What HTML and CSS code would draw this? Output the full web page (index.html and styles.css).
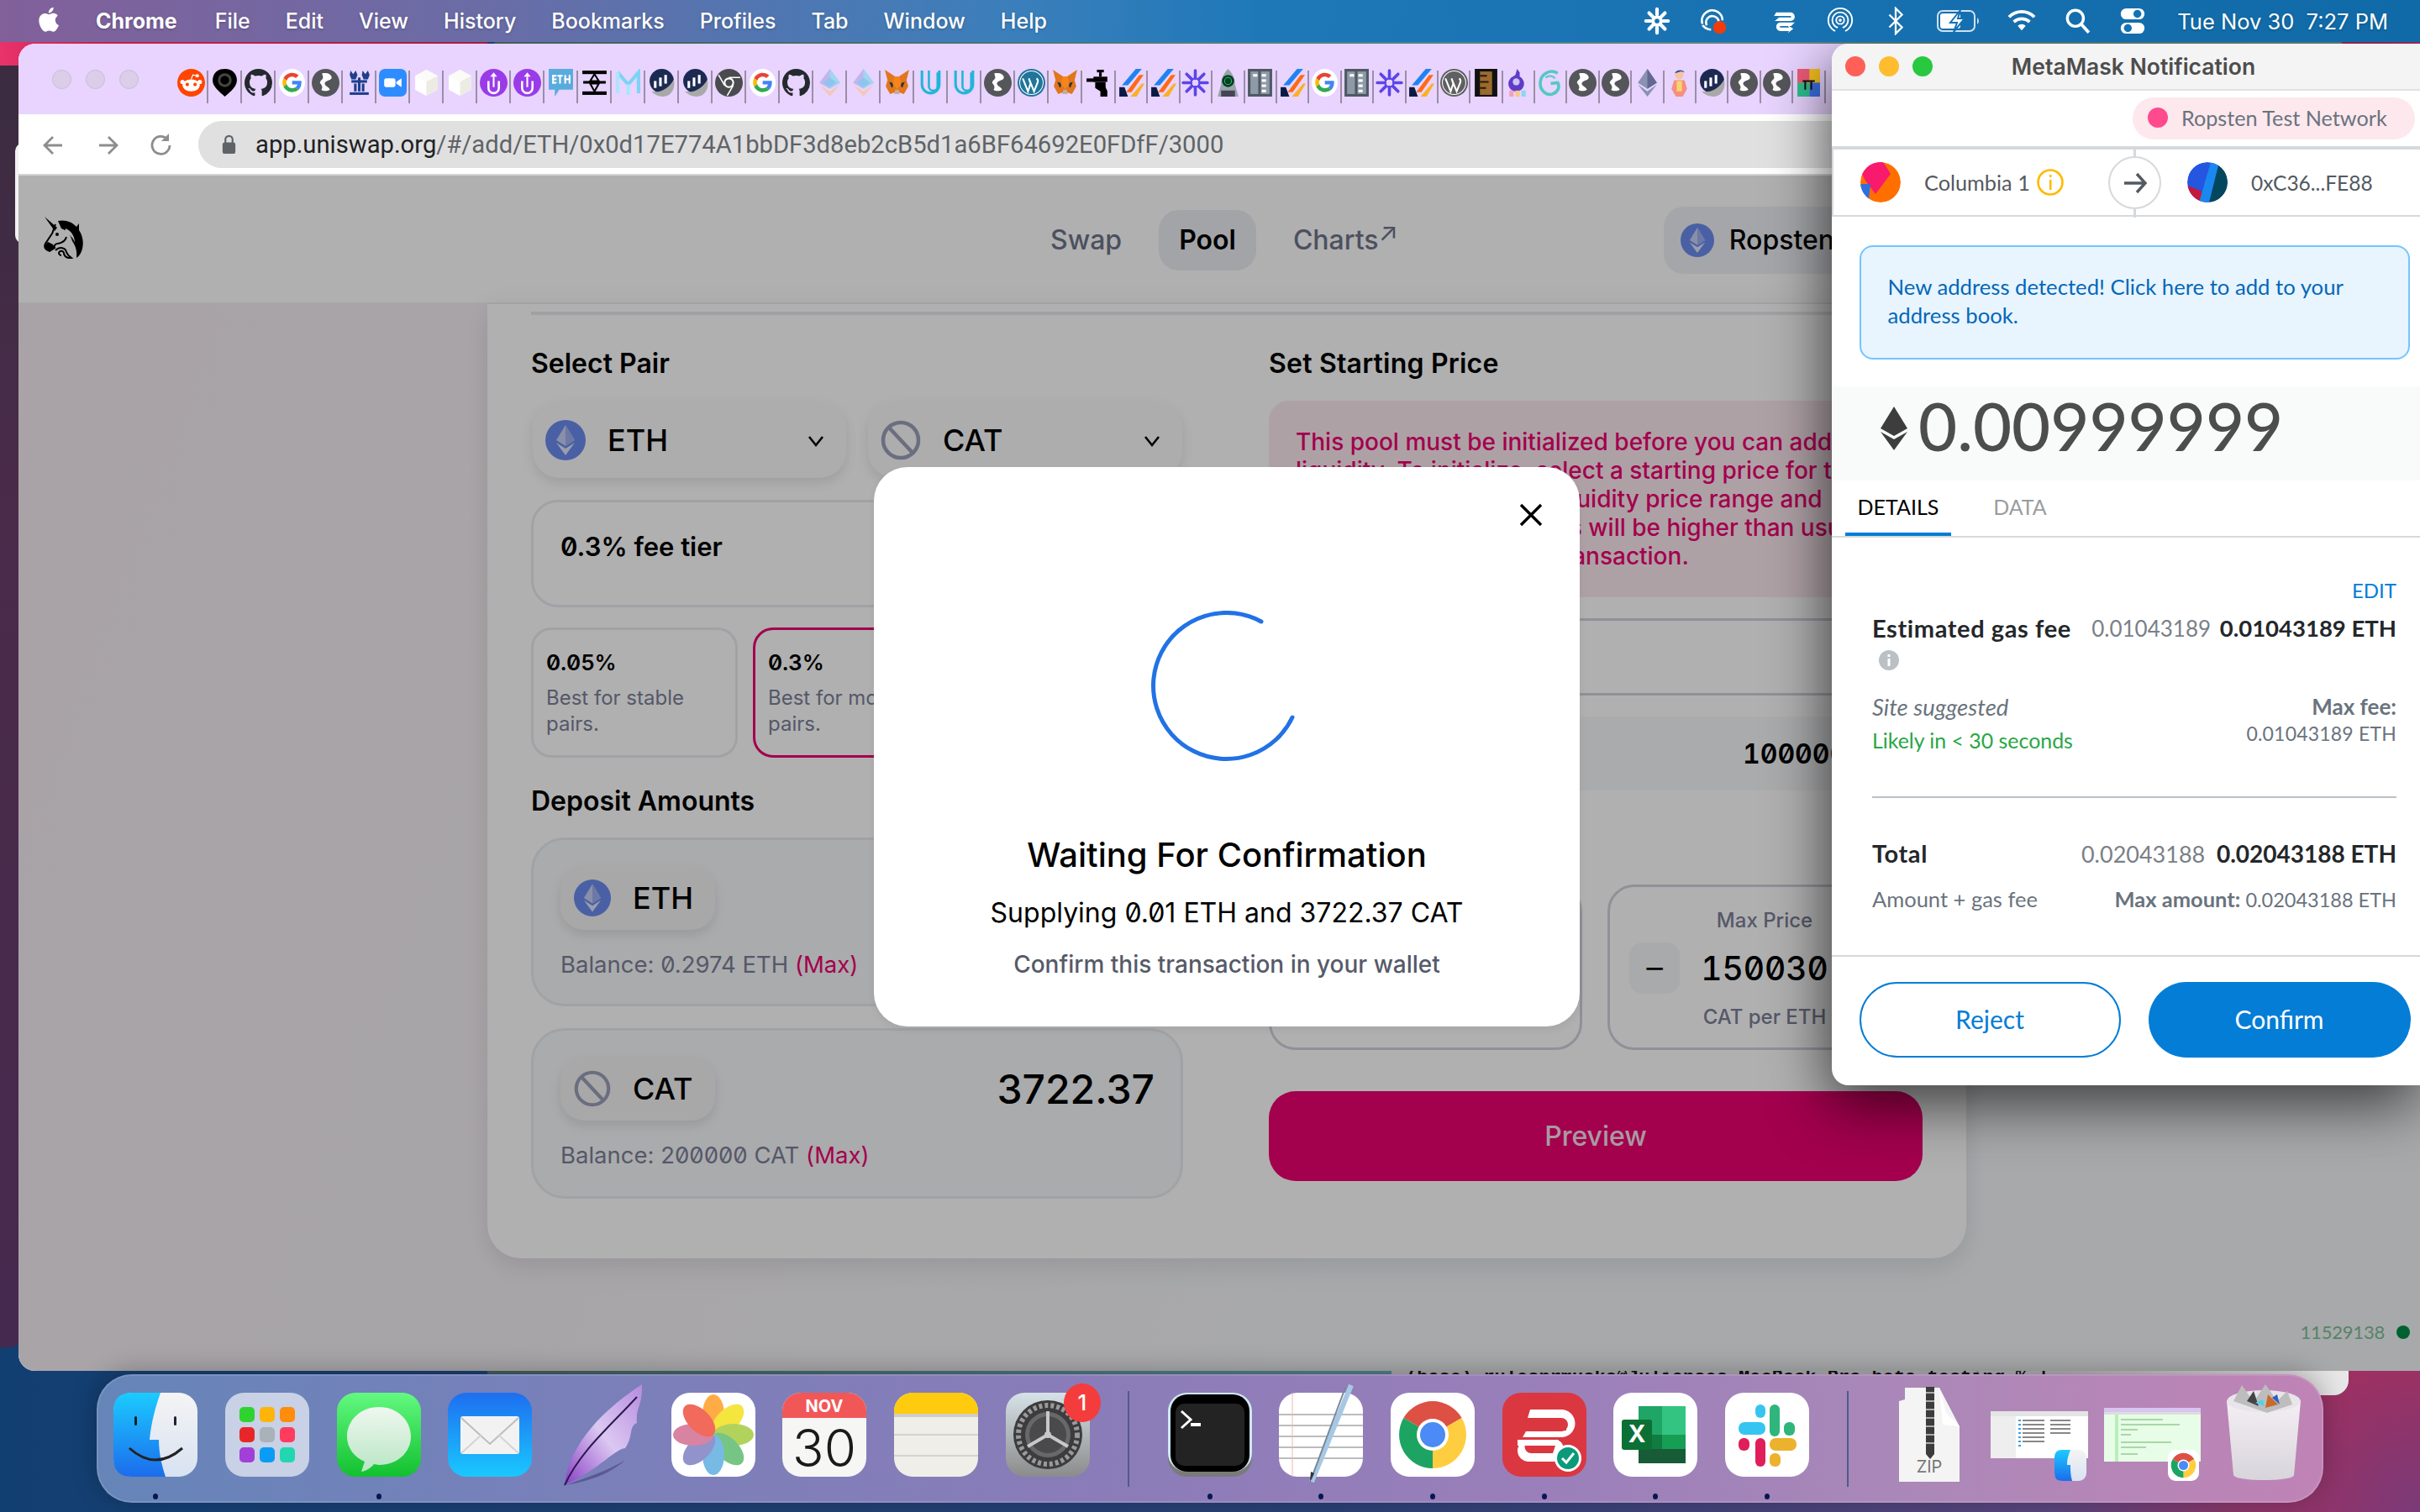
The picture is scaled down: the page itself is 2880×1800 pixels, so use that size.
FILE: index.html
```html
<!DOCTYPE html>
<html lang="en">
<head>
<meta charset="utf-8">
<title>Uniswap - MetaMask Notification</title>
<link rel="stylesheet" href="styles.css">
</head>
<body>
<svg class="defs" aria-hidden="true">
  <defs>
    <linearGradient id="gFinder" x1="0" y1="0" x2="0" y2="1"><stop offset="0" stop-color="#1ccbff"/><stop offset="1" stop-color="#1c6cec"/></linearGradient>
    <linearGradient id="gFinderR" x1="0" y1="0" x2="0" y2="1"><stop offset="0" stop-color="#f4f4f4"/><stop offset="1" stop-color="#d8e2f2"/></linearGradient>
    <linearGradient id="gMsg" x1="0" y1="0" x2="0" y2="1"><stop offset="0" stop-color="#62f980"/><stop offset="1" stop-color="#12c02f"/></linearGradient>
    <linearGradient id="gBubble" x1="0" y1="0" x2="0" y2="1"><stop offset="0" stop-color="#eef7ef"/><stop offset="1" stop-color="#b9e6c4"/></linearGradient>
    <linearGradient id="gMail" x1="0" y1="0" x2="0" y2="1"><stop offset="0" stop-color="#1e6ef0"/><stop offset="1" stop-color="#1ac8ff"/></linearGradient>
    <linearGradient id="gFeather" x1="1" y1="0" x2="0" y2="1"><stop offset="0" stop-color="#b58be0"/><stop offset=".5" stop-color="#dcc8f2"/><stop offset="1" stop-color="#8a3fc6"/></linearGradient>
    <linearGradient id="gGear" x1="0" y1="0" x2="0" y2="1"><stop offset="0" stop-color="#d6e2e8"/><stop offset="1" stop-color="#8b8b8b"/></linearGradient>
    <linearGradient id="gTrash" x1="0" y1="0" x2="0" y2="1"><stop offset="0" stop-color="#f4f0f4"/><stop offset="1" stop-color="#d8d4dc"/></linearGradient>
    <linearGradient id="gLast" x1="0" y1="0" x2="1" y2="1"><stop offset="0" stop-color="#f05a4a"/><stop offset=".5" stop-color="#f4c020"/><stop offset="1" stop-color="#1fb88a"/></linearGradient>

    <symbol id="f-reddit" viewBox="0 0 32 32"><circle cx="16" cy="16" r="16" fill="#ff4500"/><ellipse cx="16" cy="19" rx="10" ry="7" fill="#fff"/><circle cx="11.500" cy="18" r="2" fill="#ff4500"/><circle cx="20.500" cy="18" r="2" fill="#ff4500"/><circle cx="23" cy="8" r="2" fill="#fff"/><path d="M16 12 L18 7 L23 8" stroke="#fff" stroke-width="1.200" fill="none"/><circle cx="6" cy="15" r="2.500" fill="#fff"/><circle cx="26" cy="15" r="2.500" fill="#fff"/></symbol>
    <symbol id="f-alien" viewBox="0 0 32 32"><path d="M16 0C7 0 2 6 2 13c0 7 6 12 14 19 8-7 14-12 14-19C30 6 25 0 16 0z" fill="#000"/><circle cx="16" cy="13" r="8" fill="#444"/><circle cx="16" cy="13" r="5" fill="#000"/></symbol>
    <symbol id="f-github" viewBox="0 0 16 16"><path fill="#24292e" d="M8 0C3.580 0 0 3.580 0 8c0 3.540 2.290 6.530 5.470 7.590.4.070.55-.17.55-.38 0-.19-.01-.82-.01-1.490-2.010.37-2.530-.49-2.690-.94-.09-.23-.48-.94-.82-1.130-.28-.15-.68-.52-.01-.53.63-.01 1.080.58 1.230.82.72 1.210 1.870.87 2.330.66.07-.52.28-.87.51-1.070-1.780-.2-3.640-.89-3.640-3.950 0-.87.31-1.590.82-2.150-.08-.2-.36-1.020.08-2.120 0 0 .67-.21 2.200.82.64-.18 1.320-.27 2-.27.68 0 1.360.09 2 .27 1.530-1.040 2.200-.82 2.200-.82.44 1.100.16 1.920.08 2.120.51.56.82 1.270.82 2.150 0 3.070-1.870 3.750-3.650 3.950.29.25.54.73.54 1.480 0 1.070-.01 1.930-.01 2.200 0 .21.15.46.55.38A8.013 8.013 0 0016 8c0-4.420-3.580-8-8-8z"/></symbol>
    <symbol id="f-google" viewBox="0 0 64 64"><ellipse cx="32" cy="32" rx="30" ry="32" fill="#fff"/><g transform="translate(10 9) scale(.93)"><path fill="#EA4335" d="M24 9.500c3.540 0 6.710 1.220 9.210 3.600l6.850-6.850C35.900 2.380 30.470 0 24 0 14.620 0 6.510 5.380 2.560 13.220l7.980 6.190C12.430 13.720 17.740 9.500 24 9.500z"/><path fill="#4285F4" d="M46.980 24.550c0-1.570-.15-3.090-.38-4.550H24v9.020h12.940c-.58 2.960-2.260 5.480-4.780 7.180l7.730 6c4.510-4.180 7.090-10.360 7.090-17.650z"/><path fill="#FBBC05" d="M10.530 28.590c-.48-1.450-.76-2.990-.76-4.590s.27-3.140.76-4.590l-7.980-6.190C.92 16.460 0 20.120 0 24c0 3.880.92 7.540 2.560 10.780l7.970-6.190z"/><path fill="#34A853" d="M24 48c6.480 0 11.930-2.130 15.890-5.810l-7.730-6c-2.150 1.450-4.920 2.300-8.160 2.300-6.260 0-11.570-4.220-13.470-9.910l-7.980 6.190C6.510 42.620 14.620 48 24 48z"/></g></symbol>
    <symbol id="f-globe" viewBox="0 0 32 32"><circle cx="16" cy="16" r="16" fill="#55565a"/><path d="M12 5c6-1 11 1 11 5s-8 3-8 7c0 3 4 3 6 7-3 2-8 2-10 0 2-2 1-5-1-7-2-3 3-4 3-7 0-2-1-3-1-5z" fill="#fff"/></symbol>
    <symbol id="f-crown" viewBox="0 0 32 32"><g fill="#1d3f8c"><path d="M6 2l3 4 3-4 2 5-2 5H7L5 7zM20 2l3 4 3-4 2 5-2 5h-5l-2-5z"/><rect x="7" y="13" width="18" height="3"/><rect x="10" y="17" width="3" height="9"/><rect x="19" y="17" width="3" height="9"/><rect x="5" y="27" width="22" height="3"/><rect x="14.500" y="10" width="3" height="16"/></g></symbol>
    <symbol id="f-zoom" viewBox="0 0 32 32"><rect width="32" height="32" rx="7" fill="#2d8cff"/><rect x="6" y="11" width="13" height="10" rx="2.500" fill="#fff"/><path d="M20 15l6-4v10l-6-4z" fill="#fff"/></symbol>
    <symbol id="f-box" viewBox="0 0 32 32"><path d="M16 1L29 8v16L16 31 3 24V8z" fill="#f4f4ee"/><path d="M16 1L29 8 16 15 3 8z" fill="#fbfbf7"/><path d="M16 15v16L3 24V8z" fill="#fff"/><path d="M16 15L29 8v16L16 31z" fill="#ecece4"/></symbol>
    <symbol id="f-uni" viewBox="0 0 32 32"><circle cx="16" cy="16" r="16" fill="#9a3be8"/><path d="M10 14v8a6 6 0 0012 0v-8" stroke="#fff" stroke-width="2.500" fill="none"/><path d="M16 4l4 5h-8z" fill="#fff"/><rect x="15" y="9" width="2" height="12" fill="#fff"/></symbol>
    <symbol id="f-ethtag" viewBox="0 0 32 32"><path d="M2 0h28v24H14l-5 8v-8H2z" fill="#59abde"/><rect x="6" y="7" width="5" height="2" fill="#fff"/><rect x="6" y="11" width="5" height="2" fill="#fff"/><rect x="6" y="15" width="5" height="2" fill="#fff"/><rect x="6" y="7" width="2" height="10" fill="#fff"/><rect x="12" y="7" width="6" height="2" fill="#fff"/><rect x="14" y="7" width="2" height="10" fill="#fff"/><rect x="20" y="7" width="2" height="10" fill="#fff"/><rect x="25" y="7" width="2" height="10" fill="#fff"/><rect x="20" y="11" width="7" height="2" fill="#fff"/></symbol>
    <symbol id="f-tbar" viewBox="0 0 32 32"><rect x="2" y="2" width="28" height="4"/><rect x="2" y="26" width="28" height="4"/><rect x="3" y="14" width="26" height="3"/><path d="M16 6l5 8H11zM16 26l-5-9h10z" fill="none" stroke="#000" stroke-width="2"/></symbol>
    <symbol id="f-m" viewBox="0 0 32 32"><path d="M4 4l12 14L28 4v24" fill="none" stroke="#7dd3f5" stroke-width="4"/><path d="M4 4v24M16 18v12" fill="none" stroke="#a9e6fb" stroke-width="4"/></symbol>
    <symbol id="f-chart" viewBox="0 0 32 32"><circle cx="16" cy="14" r="14" fill="#1c2a52"/><rect x="7" y="14" width="3" height="8" fill="#fff"/><rect x="13" y="10" width="3" height="10" fill="#fff"/><rect x="19" y="7" width="3" height="10" fill="#fff"/><path d="M4 26c10 2 20-3 26-14 2 10-2 19-12 20-7 0-11-3-14-6z" fill="#a8a8a8"/></symbol>
    <symbol id="f-cdark" viewBox="0 0 32 32"><circle cx="16" cy="16" r="16" fill="#4a4b4f"/><circle cx="16" cy="16" r="6" fill="#fff"/><circle cx="16" cy="16" r="4" fill="#4a4b4f"/><path d="M16 10h13M11 19L4 7M21 19l-7 12" stroke="#fff" stroke-width="1.500"/></symbol>
    <symbol id="f-eth" viewBox="0 0 32 32"><path d="M16 0L28 16 16 23 4 16z" fill="#c2b5ee"/><path d="M16 0L28 16 16 23z" fill="#9fd6f0"/><path d="M16 26L28 18 16 32 4 18z" fill="#f2c8b8"/><path d="M16 10l8 6-8 5-8-5z" fill="#8fc4ee"/></symbol>
    <symbol id="f-fox" viewBox="0 0 32 32"><path d="M2 1l12 8h4l12-8-3 12 2 7-5 9-6-2h-4l-6 2-5-9 2-7z" fill="#e2761b"/><path d="M7 15l6 2-3 5zM25 15l-6 2 3 5z" fill="#233447"/><path d="M14 24h4l1 5h-6z" fill="#c0ad9e"/><path d="M13 9h6l2 9-5 5-5-5z" fill="#f6851b"/></symbol>
    <symbol id="f-ucyan" viewBox="0 0 32 32"><path d="M6 2v16a10 10 0 0020 0V2" fill="none" stroke="#22b5d8" stroke-width="3"/><path d="M14 2v18a5 5 0 0010 0V4" fill="none" stroke="#22b5d8" stroke-width="2.500"/></symbol>
    <symbol id="f-wp" viewBox="0 0 32 32"><circle cx="16" cy="16" r="16" fill="#21759b"/><circle cx="16" cy="16" r="13.500" fill="none" stroke="#fff"/><path d="M6 11l6 15 3-9-2-6M13 11l6 15 4-10c1-2 0-4-1-5" fill="none" stroke="#fff" stroke-width="2"/></symbol>
    <symbol id="f-wpg" viewBox="0 0 32 32"><circle cx="16" cy="16" r="16" fill="#5f6062"/><circle cx="16" cy="16" r="13.500" fill="none" stroke="#fff"/><path d="M6 11l6 15 3-9-2-6M13 11l6 15 4-10c1-2 0-4-1-5" fill="none" stroke="#fff" stroke-width="2"/></symbol>
    <symbol id="f-tap" viewBox="0 0 32 32"><rect x="14" y="1" width="8" height="3"/><rect x="16.500" y="4" width="3" height="5"/><rect x="10" y="9" width="16" height="6"/><rect x="2" y="11" width="10" height="4"/><path d="M12 15h12v5c0 3 2 4 2 6v6h-8v-6l-6-4z"/></symbol>
    <symbol id="f-stripe" viewBox="0 0 32 32"><path d="M21 0h7L12 19H5z" fill="#1f84f0"/><path d="M25 7h5L16 27h-6z" fill="#ff6a13"/><path d="M28 17h3L22 32h-7z" fill="#fbb023"/><path d="M2 21h6l4 11H2z" fill="#0a1a44"/></symbol>
    <symbol id="f-aster" viewBox="0 0 32 32"><g stroke="#5b45e8" stroke-width="3.500" stroke-linecap="round"><path d="M16 2v9M16 21v9M2 16h9M21 16h9M6 6l6 6M20 20l6 6M26 6l-6 6M12 20l-6 6"/></g><circle cx="16" cy="16" r="5" fill="none" stroke="#5b45e8" stroke-width="2"/></symbol>
    <symbol id="f-astro" viewBox="0 0 32 32"><path d="M16 0c6 6 8 12 8 18l4 14H4l4-14c0-6 2-12 8-18z" fill="#9aa4aa"/><circle cx="16" cy="14" r="7" fill="#063d22"/><circle cx="16" cy="14" r="4" fill="none" stroke="#24c06a"/><rect x="8" y="25" width="16" height="7" fill="#445"/></symbol>
    <symbol id="f-bldg" viewBox="0 0 32 32"><rect x="2" y="0" width="28" height="32" fill="#4e5965"/><rect x="5" y="3" width="22" height="26" fill="#8e9aa6"/><g fill="#fff"><rect x="8" y="6" width="5" height="3"/><rect x="18" y="6" width="5" height="3"/><rect x="18" y="12" width="5" height="3"/><rect x="18" y="18" width="5" height="3"/><rect x="18" y="24" width="5" height="3"/></g><rect x="14" y="3" width="3" height="26" fill="#4e5965"/></symbol>
    <symbol id="f-brown" viewBox="0 0 32 32"><rect x="3" y="0" width="26" height="32" fill="#111"/><rect x="9" y="3" width="14" height="27" fill="#9a6a2e"/><path d="M9 8h8M9 15h10M9 22h7" stroke="#2a1a0a" stroke-width="2"/></symbol>
    <symbol id="f-flask" viewBox="0 0 32 32"><path d="M15 0l3 4v5a9 9 0 11-8 0l3-2z" fill="#5e3cc8"/><circle cx="14" cy="15" r="4" fill="#cfc2f5"/><rect x="6" y="25" width="5" height="7" fill="#f59fc0"/><rect x="13" y="25" width="5" height="7" fill="#f9c780"/><rect x="20" y="25" width="5" height="7" fill="#8cd7f0"/></symbol>
    <symbol id="f-teal" viewBox="0 0 32 32"><path d="M24 5C16 0 5 5 4 15c-1 10 7 16 14 14 6-2 9-8 6-13l-8 1" fill="none" stroke="#54c8c2" stroke-width="3.500"/><path d="M10 10c4-3 9-2 11 1" fill="none" stroke="#54c8c2" stroke-width="2"/></symbol>
    <symbol id="f-ethg" viewBox="0 0 32 32"><path d="M16 0L27 16 16 23 5 16z" fill="#8a92b2"/><path d="M16 0L27 16 16 23z" fill="#62688f"/><path d="M16 26L27 18 16 32 5 18z" fill="#8a92b2"/></symbol>
    <symbol id="f-girl" viewBox="0 0 32 32"><circle cx="16" cy="7" r="5" fill="#f7c4a0"/><path d="M11 5c1-4 9-5 11-1l-4-1z" fill="#2f4aa0"/><path d="M10 13h12l3 10-5 9h-8l-5-9z" fill="#f58f80"/><rect x="13" y="14" width="6" height="12" fill="#f7d56a"/></symbol>
    <symbol id="f-last" viewBox="0 0 32 32"><rect x="3" width="26" height="32" fill="url(#gLast)"/><rect x="3" width="14" height="16" fill="#ef5a78"/><rect x="17" width="12" height="16" fill="#f4c020"/><rect x="3" y="16" width="14" height="16" fill="#2dbf8e"/><rect x="17" y="16" width="12" height="16" fill="#3b6ee0"/><path d="M9 14h14M12 14v10M19 14v10" stroke="#111" stroke-width="2"/></symbol>

    <symbol id="chrome-logo" viewBox="0 0 100 100"><path d="M50 50L15.400 30A40 40 0 0 1 84.600 30Z" fill="#dd5044"/><path d="M50 50L84.600 30A40 40 0 0 1 50 90Z" fill="#ffcd40"/><path d="M50 50L50 90A40 40 0 0 1 15.400 30Z" fill="#1da462"/><circle cx="50" cy="50" r="19" fill="#fff"/><circle cx="50" cy="50" r="15" fill="#4c8bf5"/></symbol>
    <symbol id="eth-token" viewBox="0 0 48 48"><circle cx="24" cy="24" r="24" fill="#6c8bf0"/><path d="M24 6l11 18-11 7-11-7z" fill="#c5cff5"/><path d="M24 6v25l11-7z" fill="#9eaef0"/><path d="M24 34l11-7-11 15-11-15z" fill="#e0e5fb"/></symbol>
    <symbol id="cat-token" viewBox="0 0 48 48"><circle cx="24" cy="24" r="21" fill="none" stroke="#9aa0b8" stroke-width="4.500"/><path d="M10 9l28 30" stroke="#9aa0b8" stroke-width="4.500"/></symbol>
    <symbol id="chev" viewBox="0 0 24 24"><path d="M4 8l8 10 8-10" fill="none" stroke="#000" stroke-width="2.600"/></symbol>
  </defs>
</svg>

<div class="desktop">
  <div class="back-left"></div>
  <div class="back-top"></div>
  <div class="back-sliver"></div>
  <div class="terminal"><span class="terminal-line">(base) rulesnrmusks@Julianses-MacBook-Pro beta-testing % |</span></div>

  <header class="menubar">
    <svg class="apple" viewBox="0 0 24 28"><path d="M19.700 14.900c0-3 2.400-4.400 2.500-4.500-1.400-2-3.500-2.300-4.300-2.300-1.800-.2-3.600 1.100-4.500 1.100-.9 0-2.400-1.100-3.900-1-2 0-3.900 1.200-4.900 3-2.100 3.600-.5 9 1.500 12 1 1.400 2.200 3.100 3.800 3 1.500-.1 2.100-1 3.900-1 1.800 0 2.300 1 3.900 1 1.600 0 2.700-1.500 3.700-2.900 1.200-1.700 1.600-3.300 1.700-3.400-.1 0-3.300-1.300-3.400-5zM16.700 6c.8-1 1.400-2.400 1.200-3.800-1.200.1-2.700.8-3.500 1.800-.8.900-1.500 2.300-1.300 3.700 1.400.1 2.700-.7 3.600-1.700z" fill="#fff"/></svg>
    <span class="menu-app">Chrome</span>
    <span class="menu-item">File</span>
    <span class="menu-item">Edit</span>
    <span class="menu-item">View</span>
    <span class="menu-item">History</span>
    <span class="menu-item">Bookmarks</span>
    <span class="menu-item">Profiles</span>
    <span class="menu-item">Tab</span>
    <span class="menu-item">Window</span>
    <span class="menu-item">Help</span>
    <div class="status-icons">
      <svg class="si" viewBox="0 0 34 36"><g stroke="#fff" stroke-width="4.400" stroke-linecap="round"><path d="M17 3v7M17 26v7M3 18h7M24 18h7M7 8l5 5M22 23l5 5M27 8l-5 5M12 23l-5 5"/></g><circle cx="17" cy="18" r="7" fill="#fff"/><circle cx="17" cy="18" r="3" fill="#1272b4"/></svg>
      <svg class="si si-gap" viewBox="0 0 40 36"><path d="M6 22c-3-8 2-17 12-19 9-1 16 6 16 14" fill="none" stroke="#fff" stroke-width="3"/><path d="M12 24c-3-6 1-12 7-13 6 0 10 4 10 9" fill="none" stroke="#fff" stroke-width="3"/><path d="M18 30c-5 0-9-2-12-6" fill="none" stroke="#fff" stroke-width="3"/><circle cx="30" cy="27" r="9" fill="#f03c0a"/></svg>
      <svg class="si" viewBox="0 0 40 36"><path d="M8 6h20a6 6 0 010 12H6l6-5h16a1 1 0 000-2H5z" fill="#fff"/><path d="M34 20H14a5 5 0 000 12h12l-2 3 8-6-8-5 2 3H14a1 1 0 010-2h15z" fill="#fff"/></svg>
      <svg class="si" viewBox="0 0 36 36"><g fill="none" stroke="#fff" stroke-width="2"><circle cx="18" cy="17" r="15"/><circle cx="18" cy="17" r="10"/><circle cx="18" cy="17" r="5"/></g><path d="M8 36h20L18 22z" fill="#1272b4"/><circle cx="18" cy="17" r="2" fill="#fff"/></svg>
      <svg class="si" viewBox="0 0 24 36"><path d="M4 10l16 16-8 8V2l8 8L4 26" fill="none" stroke="#fff" stroke-width="2.400"/></svg>
      <svg class="si-wide" viewBox="0 0 52 28"><rect x="1" y="2" width="44" height="24" rx="6" fill="none" stroke="#cfe2f0" stroke-width="2"/><rect x="4" y="5" width="24" height="18" rx="3" fill="#fff"/><path d="M28 1l-12 15h8l-4 11 13-16h-8z" fill="#fff" stroke="#1272b4" stroke-width="2"/><path d="M48 10v8a5 5 0 002-4 5 5 0 00-2-4z" fill="#cfe2f0"/></svg>
      <svg class="si" viewBox="0 0 36 30"><g fill="none" stroke="#fff" stroke-width="4"><path d="M2 10c9-9 23-9 32 0"/><path d="M8 16c6-5 14-5 20 0"/></g><path d="M13 21a7 7 0 0110 0l-5 6z" fill="#fff"/></svg>
      <svg class="si" viewBox="0 0 30 32"><circle cx="13" cy="13" r="9" fill="none" stroke="#fff" stroke-width="3.200"/><path d="M20 20l8 9" stroke="#fff" stroke-width="3.600"/></svg>
      <svg class="si" viewBox="0 0 36 36"><rect x="3" y="2" width="30" height="14" rx="7" fill="#fff"/><circle cx="24" cy="9" r="5" fill="#1272b4"/><rect x="3" y="20" width="30" height="14" rx="7" fill="#fff"/><circle cx="12" cy="27" r="5" fill="#1272b4"/></svg>
      <span class="clock">Tue Nov 30&nbsp;&nbsp;7:27 PM</span>
    </div>
  </header>

  <main class="chrome">
    <div class="tabbar">
      <div class="lights-off"><i></i><i></i><i></i></div>
      <div class="tabs">
        <span class="tab"><svg><use href="#f-reddit"/></svg></span><span class="tab"><svg><use href="#f-alien"/></svg></span><span class="tab"><svg><use href="#f-github"/></svg></span><span class="tab"><svg><use href="#f-google"/></svg></span><span class="tab"><svg><use href="#f-globe"/></svg></span><span class="tab"><svg><use href="#f-crown"/></svg></span><span class="tab"><svg><use href="#f-zoom"/></svg></span><span class="tab"><svg><use href="#f-box"/></svg></span><span class="tab"><svg><use href="#f-box"/></svg></span><span class="tab"><svg><use href="#f-uni"/></svg></span><span class="tab"><svg><use href="#f-uni"/></svg></span><span class="tab"><svg><use href="#f-ethtag"/></svg></span><span class="tab"><svg><use href="#f-tbar"/></svg></span><span class="tab"><svg><use href="#f-m"/></svg></span><span class="tab"><svg><use href="#f-chart"/></svg></span><span class="tab"><svg><use href="#f-chart"/></svg></span><span class="tab"><svg><use href="#f-cdark"/></svg></span><span class="tab"><svg><use href="#f-google"/></svg></span><span class="tab"><svg><use href="#f-github"/></svg></span><span class="tab"><svg><use href="#f-eth"/></svg></span><span class="tab"><svg><use href="#f-eth"/></svg></span><span class="tab"><svg><use href="#f-fox"/></svg></span><span class="tab"><svg><use href="#f-ucyan"/></svg></span><span class="tab"><svg><use href="#f-ucyan"/></svg></span><span class="tab"><svg><use href="#f-globe"/></svg></span><span class="tab"><svg><use href="#f-wp"/></svg></span><span class="tab"><svg><use href="#f-fox"/></svg></span><span class="tab"><svg><use href="#f-tap"/></svg></span><span class="tab tab-s"><svg><use href="#f-stripe"/></svg></span><span class="tab tab-s"><svg><use href="#f-stripe"/></svg></span><span class="tab tab-s"><svg><use href="#f-aster"/></svg></span><span class="tab tab-s"><svg><use href="#f-astro"/></svg></span><span class="tab tab-s"><svg><use href="#f-bldg"/></svg></span><span class="tab tab-s"><svg><use href="#f-stripe"/></svg></span><span class="tab tab-s"><svg><use href="#f-google"/></svg></span><span class="tab tab-s"><svg><use href="#f-bldg"/></svg></span><span class="tab tab-s"><svg><use href="#f-aster"/></svg></span><span class="tab tab-s"><svg><use href="#f-stripe"/></svg></span><span class="tab tab-s"><svg><use href="#f-wpg"/></svg></span><span class="tab tab-s"><svg><use href="#f-brown"/></svg></span><span class="tab tab-s"><svg><use href="#f-flask"/></svg></span><span class="tab tab-s"><svg><use href="#f-teal"/></svg></span><span class="tab tab-s"><svg><use href="#f-globe"/></svg></span><span class="tab tab-s"><svg><use href="#f-globe"/></svg></span><span class="tab tab-s"><svg><use href="#f-ethg"/></svg></span><span class="tab tab-s"><svg><use href="#f-girl"/></svg></span><span class="tab tab-s"><svg><use href="#f-chart"/></svg></span><span class="tab tab-s"><svg><use href="#f-globe"/></svg></span><span class="tab tab-s"><svg><use href="#f-globe"/></svg></span><span class="tab tab-s"><svg><use href="#f-last"/></svg></span>
      </div>
    </div>
    <div class="toolbar">
      <svg class="tool tool-first" viewBox="0 0 32 32"><path d="M26 16H6M15 6L5 16l10 10" fill="none" stroke="#8d8d8d" stroke-width="2.800"/></svg>
      <svg class="tool" viewBox="0 0 32 32"><path d="M6 16h20M17 6l10 10-10 10" fill="none" stroke="#8d8d8d" stroke-width="2.800"/></svg>
      <svg class="tool" viewBox="0 0 32 32"><path d="M26 16a10.500 10.500 0 11-3-7.500" fill="none" stroke="#8d8d8d" stroke-width="2.800"/><path d="M25 2v9h-9z" fill="#8d8d8d"/></svg>
      <div class="omnibox">
        <svg class="lock" viewBox="0 0 20 28"><rect x="1" y="11" width="18" height="16" rx="3" fill="#5f6368"/><path d="M5 12V7a5 5 0 0110 0v5" fill="none" stroke="#5f6368" stroke-width="2.600"/></svg>
        <span class="url"><b>app.uniswap.org</b>/#/add/ETH/0x0d17E774A1bbDF3d8eb2cB5d1a6BF64692E0FDfF/3000</span>
      </div>
    </div>

    <div class="page">
      <div class="site-header">
        <svg class="unicorn" viewBox="0 0 48 50">
          <path d="M1 0l15 13-3 4z" fill="#000"/>
          <path d="M17 5c8-2 17 1 22 7l3-4v8c4 6 6 14 4 22-1 5-4 9-7 11 1-8-1-14-5-20-2-8-7-13-13-15z" fill="#000"/>
          <path d="M26 14c7 3 11 9 11 17-2-6-6-10-12-12z" fill="#fff"/>
          <path d="M14 9c-2 4-2 7-4 11L2 32c-2 4 0 8 5 9l6-4c-1-3 1-5 4-5 5-1 9-3 10-8" fill="none" stroke="#000" stroke-width="2"/>
          <path d="M2 33c-1 4 2 8 5 8l6-4-2-4-6-3z" fill="#000"/>
          <circle cx="16" cy="21" r="2" fill="#000"/>
          <path d="M14 40c5-5 12-3 13 2 1 3 3 5 6 7-5 1-9-2-9-6-1-3-5-3-6 0 0 2 2 3 3 3" fill="none" stroke="#000" stroke-width="2"/>
        </svg>
        <nav class="nav">
          <a class="nav-item">Swap</a>
          <a class="nav-item nav-active">Pool</a>
          <a class="nav-item">Charts<sup class="ext">↗</sup></a>
        </nav>
        <div class="network-pill"><svg class="net-icon"><use href="#eth-token"/></svg><span>Ropsten</span></div>
      </div>

      <section class="pool-card">
        <div class="card-rule"></div>
        <div class="pool-grid">
          <div class="col">
            <h2 class="heading">Select Pair</h2>
            <div class="pair-row">
              <div class="selector"><svg class="tok"><use href="#eth-token"/></svg><span class="tok-name">ETH</span><svg class="chev"><use href="#chev"/></svg></div>
              <div class="selector"><svg class="tok"><use href="#cat-token"/></svg><span class="tok-name">CAT</span><svg class="chev"><use href="#chev"/></svg></div>
            </div>
            <div class="fee-box"><span class="fee-title">0.3% fee tier</span></div>
            <div class="fee-grid">
              <div class="fee-card"><div class="fee-pct">0.05%</div><div class="fee-note">Best for stable pairs.</div></div>
              <div class="fee-card fee-on"><div class="fee-pct">0.3%</div><div class="fee-note">Best for most pairs.</div></div>
              <div class="fee-card"></div>
            </div>
            <h2 class="heading heading-dep">Deposit Amounts</h2>
            <div class="deposit">
              <div class="dep-top"><div class="dep-pill"><svg class="tok"><use href="#eth-token"/></svg><span class="tok-name">ETH</span></div></div>
              <div class="dep-bal">Balance: 0.2974 ETH <span class="max">(Max)</span></div>
            </div>
            <div class="deposit deposit-2">
              <div class="dep-top"><div class="dep-pill"><svg class="tok"><use href="#cat-token"/></svg><span class="tok-name">CAT</span></div><span class="dep-amt">3722.37</span></div>
              <div class="dep-bal">Balance: 200000 CAT <span class="max">(Max)</span></div>
            </div>
          </div>
          <div class="col">
            <h2 class="heading heading-wide">Set Starting Price</h2>
            <div class="notice">This pool must be initialized before you can add liquidity. To initialize, select a starting price for the pool. Then, enter your liquidity price range and deposit amount. Gas fees will be higher than usual due to the initialization transaction.</div>
            <div class="price-input"></div>
            <div class="price-row"><span class="price-val">100000</span></div>
            <div class="range-grid">
              <div class="range-box range-box-min"><div class="range-unit">CAT per ETH</div></div>
              <div class="range-box"><div class="range-label">Max Price</div><div class="range-mid"><span class="step">−</span><span class="range-val">150030</span><span class="step">+</span></div><div class="range-unit">CAT per ETH</div></div>
            </div>
            <div class="preview">Preview</div>
          </div>
        </div>
      </section>

      <div class="block-num">11529138<i class="block-dot"></i></div>

      <div class="scrim">
        <div class="modal">
          <svg class="close" viewBox="0 0 28 28"><path d="M2 2l24 24M26 2L2 26" stroke="#000" stroke-width="3.400"/></svg>
          <svg class="spinner" viewBox="0 0 180 180"><path d="M168 127A87 87 0 1 1 131 13" fill="none" stroke="#2172e5" stroke-width="5" stroke-linecap="round"/></svg>
          <div class="m-title">Waiting For Confirmation</div>
          <div class="m-sub">Supplying 0.01 ETH and 3722.37 CAT</div>
          <div class="m-hint">Confirm this transaction in your wallet</div>
        </div>
      </div>
    </div>
  </main>

  <aside class="mm">
    <div class="mm-title"><span class="mm-lights"><i class="l-r"></i><i class="l-y"></i><i class="l-g"></i></span><span class="mm-name">MetaMask Notification</span></div>
    <div class="mm-net"><div class="net-pill"><i class="net-dot"></i>Ropsten Test Network</div></div>
    <div class="mm-sender">
      <div class="party">
        <svg class="avatar" viewBox="0 0 48 48"><circle cx="24" cy="24" r="24" fill="#ff6f00"/><path d="M10 2L26 -2 36 14 18 38 6 22 2 14z" fill="#f71a6d"/><path d="M0 26h12l-2 18-10-4z" fill="#2f6fe0"/></svg>
        <span class="party-name">Columbia 1</span>
        <svg class="warn" viewBox="0 0 32 32"><circle cx="16" cy="16" r="14.500" fill="none" stroke="#ffb900" stroke-width="2.600"/><rect x="15" y="7" width="2.500" height="3" fill="#ffb900"/><rect x="15" y="13" width="2.500" height="12" fill="#ffb900"/></svg>
      </div>
      <div class="party party-r">
        <svg class="avatar" viewBox="0 0 48 48"><clipPath id="avClip"><circle cx="24" cy="24" r="24"/></clipPath><g clip-path="url(#avClip)"><rect width="48" height="48" fill="#2456e0"/><path d="M0 28l16 6 6 14H0z" fill="#c6173c"/><path d="M28 0h12L26 48H14z" fill="#1a88f0"/><path d="M38 0h10v48H26z" fill="#03475e"/></g></svg>
        <span class="party-name party-addr">0xC36...FE88</span>
      </div>
      <div class="arrow-wrap"><svg viewBox="0 0 32 32"><path d="M3 16h25M18 5l10 11-10 11" fill="none" stroke="#535a61" stroke-width="3.400"/></svg></div>
    </div>
    <div class="mm-notice">New address detected! Click here to add to your address book.</div>
    <div class="mm-amount">
      <svg class="mm-eth" viewBox="0 0 32 52"><path d="M16 0l16 26-16 9L0 26z" fill="#3d3d3d"/><path d="M16 52L0 30l16 9 16-9z" fill="#3d3d3d"/></svg>
      <span class="mm-value">0.00999999</span>
    </div>
    <div class="mm-tabs"><span class="mm-tab mm-tab-on">DETAILS</span><span class="mm-tab mm-tab-off">DATA</span></div>
    <div class="mm-body">
      <div class="edit">EDIT</div>
      <div class="line line-gas"><span class="lbl">Estimated gas fee</span><span class="vals"><span class="gray">0.01043189</span> <b>0.01043189 ETH</b></span></div>
      <svg class="i-info" viewBox="0 0 24 24"><circle cx="12" cy="12" r="12" fill="#bbc0c5"/><rect x="10.500" y="5" width="3" height="3" fill="#fff"/><rect x="10.500" y="10" width="3" height="9" fill="#fff"/></svg>
      <div class="line line-site">
        <div><div class="site"><em>Site suggested</em></div><div class="likely">Likely in &lt; 30 seconds</div></div>
        <div class="max-fee"><div class="mf-h">Max fee:</div><div class="mf-v">0.01043189 ETH</div></div>
      </div>
      <div class="mm-hr"></div>
      <div class="line line-total"><span class="lbl">Total</span><span class="vals vals-total"><span class="gray">0.02043188</span> <b>0.02043188 ETH</b></span></div>
      <div class="line line-amt"><span class="small">Amount + gas fee</span><span class="small small-v"><b class="mf-b">Max amount:</b> 0.02043188 ETH</span></div>
    </div>
    <div class="mm-foot"><button class="btn btn-o">Reject</button><button class="btn btn-p">Confirm</button></div>
  </aside>

  <footer class="dock">
    <div class="dk"><svg viewBox="0 0 100 100"><rect width="100" height="100" rx="22" fill="url(#gFinderR)"/><path d="M0 22Q0 0 22 0H56C47 25 44 45 43 56H54C54 70 57 85 62 100H22Q0 100 0 78Z" fill="url(#gFinder)"/><rect x="25" y="28" width="3" height="11" rx="1.500" fill="#122"/><rect x="72" y="28" width="3" height="11" rx="1.500" fill="#223"/><path d="M19 66Q50 94 82 66" fill="none" stroke="#222" stroke-width="3"/></svg><i class="dot"></i></div>
    <div class="dk"><svg viewBox="0 0 100 100"><rect width="100" height="100" rx="22" fill="#c8d1e5"/><rect x="17" y="17" width="18" height="18" rx="5" fill="#2fd32f"/><rect x="41" y="17" width="18" height="18" rx="5" fill="#ffb40a"/><rect x="65" y="17" width="18" height="18" rx="5" fill="#ff8c0a"/><rect x="17" y="41" width="18" height="18" rx="5" fill="#e8262a"/><rect x="41" y="41" width="18" height="18" rx="5" fill="#a8b2b8"/><rect x="65" y="41" width="18" height="18" rx="5" fill="#ff3b5e"/><rect x="17" y="65" width="18" height="18" rx="5" fill="#a23fd8"/><rect x="41" y="65" width="18" height="18" rx="5" fill="#0a9cf5"/><rect x="65" y="65" width="18" height="18" rx="5" fill="#22d6b0"/></svg></div>
    <div class="dk"><svg viewBox="0 0 100 100"><rect width="100" height="100" rx="22" fill="url(#gMsg)"/><path d="M50 17C28 17 12 33 12 52c0 14 9 25 21 30l-4 12c6-1 12-5 15-9 2 0 4 1 6 1 22 0 38-15 38-34S72 17 50 17z" fill="url(#gBubble)"/></svg><i class="dot"></i></div>
    <div class="dk"><svg viewBox="0 0 100 100"><rect width="100" height="100" rx="22" fill="url(#gMail)"/><rect x="15" y="28" width="70" height="45" rx="3" fill="#f2f2f2"/><path d="M16 30l34 31 34-31" fill="none" stroke="#bdbdbd" stroke-width="2"/><path d="M16 72l24-22M84 72L60 50" fill="none" stroke="#d4d4d4" stroke-width="2"/></svg></div>
    <div class="dk"><svg viewBox="0 0 100 100"><path d="M98 -10C99 15 90 18 92 36 82 40 88 52 78 66 64 68 52 88 6 110 10 70 40 28 98 -10Z" fill="url(#gFeather)"/><path d="M92 5C60 40 24 70 6 110" fill="none" stroke="#2a1a4a" stroke-width="2"/><path d="M8 110C40 104 60 96 78 80 60 92 34 100 8 110Z" fill="#4a3d78" opacity=".6"/></svg></div>
    <div class="dk"><svg viewBox="0 0 100 100"><rect width="100" height="100" rx="22" fill="#fff"/><g opacity=".82"><ellipse cx="50" cy="26" rx="13" ry="24" fill="#ff9b1e"/><ellipse cx="50" cy="26" rx="13" ry="24" fill="#f4e016" transform="rotate(45 50 50)"/><ellipse cx="50" cy="26" rx="13" ry="24" fill="#a2ca38" transform="rotate(90 50 50)"/><ellipse cx="50" cy="26" rx="13" ry="24" fill="#5ab96a" transform="rotate(135 50 50)"/><ellipse cx="50" cy="26" rx="13" ry="24" fill="#5aabdf" transform="rotate(180 50 50)"/><ellipse cx="50" cy="26" rx="13" ry="24" fill="#7c7cc2" transform="rotate(225 50 50)"/><ellipse cx="50" cy="26" rx="13" ry="24" fill="#d0688e" transform="rotate(270 50 50)"/><ellipse cx="50" cy="26" rx="13" ry="24" fill="#ee4a38" transform="rotate(315 50 50)"/></g></svg></div>
    <div class="dk"><svg viewBox="0 0 100 100"><clipPath id="calClip"><rect width="100" height="100" rx="22"/></clipPath><g clip-path="url(#calClip)"><rect width="100" height="100" fill="#f6f6f4"/><rect width="100" height="30" fill="#f25757"/></g><text x="50" y="23" class="cal-m" text-anchor="middle">NOV</text><text x="50" y="88" class="cal-d" text-anchor="middle">30</text></svg></div>
    <div class="dk"><svg viewBox="0 0 100 100"><clipPath id="notesClip"><rect width="100" height="100" rx="22"/></clipPath><g clip-path="url(#notesClip)"><rect width="100" height="100" fill="#f0eee8"/><rect width="100" height="25" fill="#ffcb0f"/><rect y="25" width="100" height="4" fill="#cfcfc8"/><rect y="49" width="100" height="2" fill="#d4d4d0"/><rect y="74" width="100" height="2" fill="#d4d4d0"/></g></svg></div>
    <div class="dk"><svg viewBox="0 0 100 100"><rect width="100" height="100" rx="22" fill="url(#gGear)"/><circle cx="50" cy="50" r="41" fill="#3c3c3e"/><circle cx="50" cy="50" r="35" fill="none" stroke="#9a9a9a" stroke-width="6" stroke-dasharray="4 3"/><circle cx="50" cy="50" r="27" fill="#68686a"/><circle cx="50" cy="50" r="22" fill="#4a4a4c"/><path d="M50 50V22M50 50L26 64M50 50L74 64" stroke="#c8c8c8" stroke-width="4"/><circle cx="50" cy="50" r="4" fill="#c8c8c8"/><ellipse cx="91" cy="12" rx="22" ry="23" fill="#f43c3c"/><text x="91" y="21" class="badge" text-anchor="middle">1</text></svg></div>
    <div class="dk-sep"></div>
    <div class="dk"><svg viewBox="0 0 100 100"><rect width="100" height="100" rx="22" fill="#7a7a7a"/><rect y="0" width="100" height="94" rx="22" fill="#cfe6f2"/><rect x="3" y="2" width="94" height="92" rx="20" fill="#000"/><rect x="9" y="13" width="82" height="74" rx="10" fill="#232323"/><path d="M16 22l11 10-11 10" fill="none" stroke="#fff" stroke-width="3"/><rect x="27" y="36" width="12" height="4" fill="#fff"/></svg><i class="dot"></i></div>
    <div class="dk"><svg viewBox="0 0 100 100"><rect width="100" height="100" rx="22" fill="#fff"/><path d="M0 26h100M0 39h100M0 52h100M0 65h100M0 78h100" stroke="#bcbcbc" stroke-width="2"/><path d="M16 0v100" stroke="#f0b8b0"/><path d="M86 -9L39 106" stroke="#a6c8e4" stroke-width="6"/><path d="M79 -6L38 104" stroke="#789" stroke-width="2"/><path d="M42 96l-5 10 1-12z" fill="#333"/></svg><i class="dot"></i></div>
    <div class="dk"><svg viewBox="0 0 100 100"><rect width="100" height="100" rx="22" fill="#fff"/><use href="#chrome-logo" x="0" y="0" width="100" height="100"/></svg><i class="dot"></i></div>
    <div class="dk"><svg viewBox="0 0 100 100"><rect width="100" height="100" rx="22" fill="#da3741"/><path d="M33 20H70a16 16 0 010 33H24l4-7H70a6 6 0 000-16H30z" fill="#fff"/><rect x="28" y="39" width="48" height="6" fill="#da3741"/><path d="M18 56H66a14 14 0 01-4 26H30a13 13 0 01-4-25h8a5 5 0 000 15H60l3-9H18z" fill="#fff"/><circle cx="78" cy="78" r="16" fill="#fff"/><circle cx="78" cy="78" r="13" fill="#0b9a7a"/><path d="M71 78l5 5 9-11" fill="none" stroke="#fff" stroke-width="3"/></svg><i class="dot"></i></div>
    <div class="dk"><svg viewBox="0 0 100 100"><rect width="100" height="100" rx="22" fill="#fff"/><rect x="30" y="16" width="28" height="34" fill="#1fa565"/><rect x="58" y="16" width="28" height="34" fill="#33c481"/><rect x="30" y="50" width="28" height="17" fill="#107c41"/><rect x="58" y="50" width="28" height="17" fill="#169e55"/><rect x="30" y="67" width="56" height="17" fill="#185c37"/><rect x="10" y="32" width="36" height="36" rx="3" fill="#0c7035"/><text x="28" y="59" class="xl" text-anchor="middle">X</text></svg><i class="dot"></i></div>
    <div class="dk"><svg viewBox="0 0 100 100"><rect width="100" height="100" rx="22" fill="#fff"/><rect x="53" y="14" width="12" height="38" rx="6" fill="#2eb67d"/><rect x="70" y="35" width="13" height="16" rx="6" fill="#2eb67d"/><rect x="36" y="14" width="12" height="16" rx="6" fill="#36c5f0"/><rect x="16" y="35" width="32" height="15" rx="7" fill="#36c5f0"/><rect x="53" y="54" width="32" height="15" rx="7" fill="#ecb22e"/><rect x="53" y="72" width="13" height="16" rx="6" fill="#ecb22e"/><rect x="36" y="54" width="12" height="34" rx="6" fill="#e01e5a"/><rect x="16" y="54" width="13" height="15" rx="6" fill="#e01e5a"/></svg><i class="dot"></i></div>
    <div class="dk-sep"></div>
    <div class="dk"><svg viewBox="0 0 100 100"><path d="M21 -6H62L86 40V106H14V10l7-2z" fill="#f4f4f4"/><path d="M62 -6l8 30 16 16-20-2z" fill="#fff"/><path d="M46 -7h10v80l-5 6-5-6z" fill="#3c3c3c"/><path d="M46 0h10M46 10h10M46 20h10M46 30h10M46 40h10M46 50h10M46 60h10" stroke="#aaa" stroke-width="2"/><text x="50" y="95" class="zip" text-anchor="middle">ZIP</text></svg></div>
    <div class="dk"><svg viewBox="0 0 100 100"><rect x="-9" y="22" width="116" height="56" fill="#fff"/><rect x="-9" y="22" width="116" height="6" fill="#e4e4e4"/><rect x="-9" y="28" width="30" height="50" fill="#eee"/><g fill="#3aa0e0"><rect x="24" y="32" width="3" height="2"/><rect x="24" y="37" width="3" height="2"/><rect x="24" y="42" width="3" height="2"/><rect x="24" y="47" width="3" height="2"/><rect x="24" y="52" width="3" height="2"/><rect x="24" y="57" width="3" height="2"/><rect x="24" y="62" width="3" height="2"/></g><g fill="#888"><rect x="29" y="32" width="26" height="2"/><rect x="29" y="37" width="26" height="2"/><rect x="29" y="42" width="26" height="2"/><rect x="29" y="47" width="26" height="2"/><rect x="29" y="52" width="26" height="2"/><rect x="29" y="57" width="26" height="2"/><rect x="62" y="32" width="24" height="2"/><rect x="62" y="37" width="24" height="2"/><rect x="62" y="42" width="24" height="2"/><rect x="62" y="47" width="24" height="2"/></g><rect x="67" y="68" width="38" height="37" rx="9" fill="url(#gFinderR)"/><path d="M67 77q0-9 9-9h10c-3 8-4 12-4 18h4c0 6 0 12 2 19H76q-9 0-9-9z" fill="url(#gFinder)"/></svg></div>
    <div class="dk"><svg viewBox="0 0 100 100"><rect x="-7" y="18" width="115" height="64" fill="#e7fde7"/><rect x="-7" y="18" width="115" height="5" fill="#d8c4f0"/><rect x="-7" y="23" width="115" height="3" fill="#ddd"/><rect x="6" y="26" width="4" height="56" fill="#b8f0b8"/><g fill="#a8d8a8"><rect x="13" y="31" width="50" height="2"/><rect x="13" y="37" width="70" height="2"/><rect x="13" y="43" width="20" height="2"/><rect x="13" y="49" width="12" height="2"/><rect x="13" y="58" width="60" height="2"/><rect x="13" y="64" width="30" height="2"/><rect x="13" y="72" width="20" height="2"/></g><rect x="69" y="68" width="37" height="37" rx="9" fill="#fff"/><use href="#chrome-logo" x="69" y="68" width="37" height="37"/></svg></div>
    <div class="dk"><svg viewBox="0 0 100 100"><path d="M6 10c0-6 88-6 88 0L86 98c-1 8-70 8-72 0z" fill="url(#gTrash)"/><ellipse cx="50" cy="10" rx="44" ry="13" fill="#e8e4ea"/><path d="M14 10L24 -9l14 20 14-21 14 20 12-12 6 16-30 10z" fill="#bdbdbd"/><path d="M30 10l8-12 6 18z" fill="#444"/><path d="M55 2l12 12-15 4z" fill="#c86a2a"/><path d="M40 12l9-4 2 8z" fill="#4fd3ea"/><path d="M60 6l6-4 3 12z" fill="#2f5fc0"/></svg></div>
  </footer>
</div>
</body>
</html>
```
FILE: styles.css
```css
* { box-sizing: border-box; }
html, body { margin: 0; padding: 0; width: 2880px; height: 1800px; overflow: hidden; }
body { font-family: Inter, "Liberation Sans", sans-serif; color: #000; }
i { display: block; }
.defs { position: absolute; width: 0; height: 0; }

.desktop {
  position: relative; width: 2880px; height: 1800px; overflow: hidden;
  background:
    radial-gradient(circle at 100% 100%, #7a3a78 0, rgba(122,58,120,0) 220px),
    linear-gradient(90deg, #123f72 0%, #2a4074 55%, #59447c 85%, #a52e5d 97%);
}

/* windows behind */
.back-left { position: absolute; left: -40px; top: 66px; width: 70px; height: 1538px; border-radius: 20px; background: linear-gradient(180deg, #3a2c40, #4a2b4a 35%, #46294e); }
.back-top { position: absolute; left: 0; top: 48px; width: 580px; height: 30px; background: linear-gradient(90deg, #e8336b, #c8204e 20%, #a31e45); }
.back-sliver { position: absolute; left: 18px; top: 170px; width: 20px; height: 120px; border-radius: 10px; background: #f2f2f2; }
.terminal { position: absolute; z-index: 0; left: 580px; top: 48px; width: 2215px; height: 1613px; border-radius: 18px; background: linear-gradient(90deg, #3f5f5c 0, #4e8084 40%, #6a8c86 100%); overflow: hidden; }
.terminal::after { content: ""; position: absolute; left: 1076px; right: 0; bottom: 0; height: 30px; background: linear-gradient(90deg, #a8a8a8, #b0b0b0 70%, #e8e8e8); }
.terminal-line { position: absolute; z-index: 1; left: 1093px; bottom: 7px; font: 700 22px/26px "Liberation Mono", monospace; color: #111; white-space: nowrap; }

/* menu bar */
.menubar {
  position: absolute; left: 0; top: 0; width: 2880px; height: 50px; z-index: 3;
  display: flex; align-items: center; gap: 42px; padding-left: 42px;
  background: linear-gradient(90deg, #82609a 0%, #6a6ca6 20%, #3a7fbb 42%, #1e78b8 52%, #106aa8 100%);
  font-size: 25px; font-weight: 500; color: #fff;
  text-shadow: 0 1px 3px rgba(0,0,0,.25);
}
.apple { width: 29px; height: 34px; margin-right: 3px; margin-top: -4px; flex: none; }
.menu-app { font-weight: 700; margin-left: -2px; margin-right: 3px; }
.status-icons { position: absolute; left: 0; top: 0; width: 2880px; height: 50px; display: flex; align-items: center; justify-content: flex-end; padding-right: 38px; gap: 32px; font-weight: 400; }
.si { width: 34px; height: 34px; flex: none; }
.si-gap { margin-right: 20px; }
.si-wide { width: 52px; height: 30px; flex: none; }
.clock { font-size: 25.500px; margin-left: 4px; }

/* browser window */
.chrome { position: absolute; left: 22px; top: 52px; width: 2876px; height: 1580px; border-radius: 20px; overflow: hidden; background: #fff; display: flex; flex-direction: column; }
.tabbar { height: 84px; flex: none; display: flex; align-items: center; background: #e8d4ff; }
.lights-off { display: flex; gap: 17px; margin-left: 40px; width: 146px; flex: none; }
.lights-off i { width: 23px; height: 23px; border-radius: 50%; background: #dccde9; border: 1px solid #c8bcd4; }
.tabs { display: flex; height: 39px; margin-top: 18px; }
.tab { flex: none; width: 40px; height: 39px; border-right: 2px solid #9a8ea6; display: flex; align-items: flex-start; justify-content: center; }
.tab-s { width: 38.400px; }
.tab svg { width: 33px; height: 33px; margin-top: -2px; }

.toolbar { height: 73px; flex: none; display: flex; align-items: center; background: #fff; border-bottom: 2px solid #d4d4d4; }
.tool { width: 32px; height: 32px; margin-left: 32px; flex: none; position: relative; top: 1px; }
.tool-first { margin-left: 26px; }
.omnibox { margin-left: 28px; height: 56px; margin-top: 1px; flex: 1; border-radius: 28px; background: #e0e0e0; display: flex; align-items: center; padding-left: 28px; }
.lock { width: 17px; height: 24px; flex: none; }
.url { margin-left: 23px; font-family: Roboto, sans-serif; font-size: 29.200px; color: #5f6368; white-space: nowrap; }
.url b { font-weight: 400; color: #202124; }

/* uniswap page */
.page { position: relative; flex: 1; background: linear-gradient(110deg, #f5ecf2 0, #f4eff3 25%, #f3f5f8 60%, #f3f5f8 100%); }
.site-header { height: 153px; display: flex; align-items: center; padding-left: 30px; background: #fff; border-bottom: 2px solid #f0f1f5; }
.unicorn { width: 48px; height: 50px; flex: none; margin-top: -4px; }
.nav { display: flex; gap: 20px; margin-left: 1126px; margin-top: 2px; }
.nav-item { font-size: 32px; font-weight: 500; height: 72px; line-height: 72px; padding: 0 24px; border-radius: 24px; color: #6f748a; }
.nav-active { color: #000; font-weight: 600; background: #edeef2; }
.ext { font-size: 30px; line-height: 0; vertical-align: 10px; font-weight: 400; }
.network-pill { margin-left: 292px; margin-top: 2px; height: 80px; width: 300px; flex: none; border-radius: 24px; background: #f0f1f5; display: flex; align-items: center; padding-left: 20px; gap: 18px; font-size: 32px; font-weight: 500; }
.net-icon { width: 40px; height: 40px; }

.pool-card { width: 1760px; margin-left: 558px; padding: 9px 52px 71px 52px; background: #fff; border-radius: 0 0 40px 40px; box-shadow: 0 0 30px rgba(0,0,0,.05), 0 16px 30px rgba(0,0,0,.06); }
.card-rule { height: 4px; margin-bottom: 1px; background: #e8e9ee; }
.pool-grid { display: grid; grid-template-columns: 776px 778px; column-gap: 102px; }
.heading { margin: 37px 0 0; font-size: 32px; line-height: 40px; font-weight: 600; }
.heading-wide { letter-spacing: .2px; }
.heading-dep { margin-top: 32px; }
.pair-row { display: grid; grid-template-columns: 373px 374px; column-gap: 26px; margin-top: 25px; padding-left: 2px; }
.selector { height: 91px; border-radius: 32px; background: #fbfbfc; box-shadow: 0 6px 14px rgba(0,0,0,.1); display: flex; align-items: center; padding-left: 15px; padding-right: 24px; }
.tok { width: 48px; height: 48px; flex: none; }
.tok-name { font-size: 36px; font-weight: 500; margin-left: 26px; }
.chev { width: 24px; height: 24px; margin-left: auto; }
.fee-box { margin-top: 26px; height: 128px; border: 3px solid #e9ebf1; border-radius: 32px; padding-left: 32px; padding-top: 34px; }
.fee-title { font-size: 31px; font-weight: 600; font-feature-settings: "zero" 1; }
.fee-grid { margin-top: 24px; display: grid; grid-template-columns: repeat(3, 246px); column-gap: 18px; }
.fee-card { height: 155px; border: 3px solid #e9ebf1; border-radius: 24px; padding: 22px 16px 0 15px; }
.fee-on { border-color: #ed0070; }
.fee-pct { font-size: 26px; line-height: 34px; font-weight: 600; font-feature-settings: "zero" 1; }
.fee-note { margin-top: 9px; font-size: 24px; line-height: 31px; color: #7c8099; }
.deposit { margin-top: 23px; height: 201px; border: 3px solid #e9ebf1; border-radius: 40px; background: #f7f8fa; padding: 31px 31px 0 32px; }
.deposit-2 { margin-top: 26px; height: 203px; }
.dep-top { display: flex; align-items: center; justify-content: space-between; }
.dep-pill { width: 184px; height: 76px; border-radius: 28px; background: #f3f3f4; box-shadow: 0 6px 14px rgba(0,0,0,.1); display: flex; align-items: center; padding-left: 16px; }
.dep-pill .tok { width: 44px; height: 44px; }
.dep-amt { font-size: 48px; font-weight: 500; }
.dep-bal { margin-top: 24px; font-size: 27.500px; line-height: 34px; color: #7c8099; font-feature-settings: "zero" 1; }
.max { color: #ed0070; font-weight: 400; }
.notice { margin-top: 24px; height: 234px; background: #fdeaf1; border-radius: 24px; padding: 32px 32px 0; font-size: 28px; line-height: 34px; font-weight: 500; color: #ed0070; }
.price-input { margin-top: 25px; height: 92px; border: 3px solid #d0d3dc; border-radius: 24px; }
.price-row { margin-top: 25px; height: 88px; background: #f7f8fa; border-radius: 24px; display: flex; align-items: center; padding: 0 0 0 564px; font-size: 32px; font-weight: 600; font-feature-settings: "zero" 1, "tnum" 1; }
.range-grid { margin-top: 112px; display: grid; grid-template-columns: 373px 374px; column-gap: 30px; }
.range-box { height: 197px; border: 3px solid #d0d3dc; border-radius: 32px; padding: 0 23px; display: flex; flex-direction: column; align-items: center; }
.range-box-min { justify-content: flex-end; padding-bottom: 22px; }
.range-label { margin-top: 24px; font-size: 24px; line-height: 32px; color: #7c8099; font-weight: 500; }
.range-mid { width: 100%; display: flex; align-items: center; margin-top: 10px; }
.step { width: 60px; height: 61px; flex: none; border-radius: 16px; background: #f5f6f8; font-size: 44px; line-height: 56px; font-weight: 300; text-align: center; color: #000; }
.range-val { flex: 1; text-align: center; font-size: 39px; font-weight: 500; font-feature-settings: "zero" 1, "tnum" 1; }
.range-unit { margin-top: 12px; font-size: 24px; line-height: 32px; color: #7c8099; font-weight: 500; }
.preview { margin-top: 49px; height: 107px; border-radius: 32px; background: #ed0070; color: #f5e0ea; font-size: 32px; font-weight: 500; display: flex; align-items: center; justify-content: center; }

.block-num { position: absolute; right: 30px; bottom: 30px; display: flex; align-items: center; gap: 14px; font-size: 22px; letter-spacing: -.2px; line-height: 32px; color: #7cbf96; font-family: Lato, sans-serif; }
.block-dot { width: 16px; height: 16px; border-radius: 50%; background: #008c45; }

.scrim { position: absolute; inset: 0; background: rgba(0,0,0,.31); display: flex; justify-content: center; align-items: flex-start; padding-top: 347px; }
.modal { position: relative; width: 840px; height: 666px; border-radius: 40px; background: #fff; display: flex; flex-direction: column; align-items: center; box-shadow: 0 4px 10px rgba(0,0,0,.06); }
.close { position: absolute; right: 44px; top: 43px; width: 28px; height: 28px; }
.spinner { width: 180px; height: 180px; margin-top: 171px; flex: none; }
.m-title { margin-top: 86px; font-size: 40px; line-height: 50px; font-weight: 500; }
.m-sub { margin-top: 24px; font-size: 32px; line-height: 40px; font-feature-settings: "zero" 1; }
.m-hint { margin-top: 23px; font-size: 28px; line-height: 36px; font-weight: 500; color: #565a69; }

/* metamask */
.mm { position: absolute; left: 2180px; top: 52px; width: 700px; height: 1240px; z-index: 2; background: #fff; border-radius: 20px 0 0 20px; box-shadow: -4px 22px 70px rgba(0,0,0,.65); font-family: Lato, sans-serif; overflow: hidden; }
.mm-title { position: relative; height: 56px; background: #f4f4f4; border-bottom: 2px solid #e2e2e2; display: flex; align-items: center; justify-content: center; }
.mm-lights { position: absolute; left: 16px; top: 15px; display: flex; gap: 16px; }
.mm-lights i { width: 24px; height: 24px; border-radius: 50%; }
.l-r { background: #ff5f57; } .l-y { background: #febc2e; } .l-g { background: #28c840; }
.mm-name { font-family: Inter, sans-serif; font-size: 26.500px; font-weight: 600; color: #4d4d4d; margin-left: 18px; }
.mm-net { height: 66px; display: flex; justify-content: flex-end; align-items: center; padding-right: 6px; padding-top: 0; }
.net-pill { width: 336px; height: 50px; padding-bottom: 2px; border-radius: 25px; background: #fce8ed; display: flex; align-items: center; padding-left: 18px; gap: 16px; font-size: 25.200px; color: #6a737d; }
.net-dot { width: 24px; height: 24px; border-radius: 50%; background: #ff4a8d; }
.mm-sender { position: relative; display: grid; grid-template-columns: 1fr 1fr; height: 84px; border-top: 4px solid #d6d9dc; border-bottom: 2px solid #d6d9dc; border-left: 2px solid #d6d9dc; }
.party { display: flex; align-items: center; padding-left: 32px; }
.party-r { padding-left: 72px; }
.avatar { width: 48px; height: 48px; flex: none; border-radius: 50%; overflow: hidden; }
.party-name { font-size: 25.300px; color: #535a61; margin-left: 28px; white-space: nowrap; }
.party-addr { font-size: 24.500px; }
.warn { width: 32px; height: 32px; margin-left: 8px; flex: none; }
.arrow-wrap { position: absolute; left: 327px; top: 8px; width: 63px; height: 63px; border-radius: 50%; background: #fff; border: 2px solid #d6d9dc; display: flex; align-items: center; justify-content: center; }
.arrow-wrap svg { width: 32px; height: 32px; }
.arrow-wrap::before, .arrow-wrap::after { content: ""; position: absolute; left: 28px; width: 3px; height: 10px; background: #d6d9dc; }
.arrow-wrap::before { top: -12px; }
.arrow-wrap::after { bottom: -12px; }
.mm-notice { margin: 34px 0 0 32.500px; width: 655px; height: 136px; border: 2px solid #75c4fd; border-radius: 16px; background: #e8f4fe; padding: 30px 30px 0 32px; font-size: 25.700px; line-height: 34px; color: #0367b8; }
.mm-amount { margin-top: 32px; height: 112px; background: #f9fafa; display: flex; align-items: center; padding: 0 0 12px 58px; gap: 13px; }
.mm-eth { width: 32px; height: 52px; flex: none; }
.mm-value { font-size: 79.600px; color: #4d4d4d; line-height: 1; font-weight: 500; margin-bottom: 6px; }
.mm-tabs { height: 68px; border-bottom: 2px solid #d6d9dc; display: flex; padding-left: 16px; }
.mm-tab { height: 66px; line-height: 62px; font-size: 25px; text-align: center; }
.mm-tab-on { width: 126px; color: #000; border-bottom: 4px solid #037dd6; }
.mm-tab-off { width: 112px; margin-left: 26px; color: #9a9ca0; }
.mm-body { padding: 49px 28px 0 48px; font-size: 26px; color: #6a737d; }
.edit { text-align: right; line-height: 28px; font-size: 24px; color: #037dd6; }
.line { display: flex; justify-content: space-between; }
.line-gas { margin-top: 14px; line-height: 34px; }
.lbl { font-weight: 700; font-size: 29px; letter-spacing: .6px; color: #24272a; }
.vals b { color: #24272a; font-size: 27.500px; font-weight: 700; margin-left: 4px; }
.vals-total .gray { font-size: 27px; }
.vals-total b { font-size: 28px; margin-left: 7px; }
.gray { color: #7a8087; }
.i-info { display: block; width: 24px; height: 24px; margin: 9px 0 0 8px; }
.line-site { margin-top: 27px; }
.site { line-height: 34px; font-size: 27.500px; }
.likely { line-height: 34px; margin-top: 5px; color: #28a745; font-size: 24.900px; }
.max-fee { text-align: right; line-height: 32px; }
.mf-h { font-weight: 700; }
.mf-v { line-height: 33px; font-size: 23px; letter-spacing: .2px; }
.mf-b { font-weight: 700; font-size: 25.500px; }
.mm-hr { height: 2px; margin-top: 50px; background: #bbc0c5; }
.line-total { margin-top: 49px; line-height: 34px; }
.line-amt { margin-top: 19px; line-height: 34px; }
.small { font-size: 25.500px; }
.small-v { font-size: 23.500px; }
.mm-foot { margin-top: 49px; border-top: 2px solid #d6d9dc; padding: 30px 12px 0 32.500px; display: grid; grid-template-columns: 311px 312px; column-gap: 33px; }
.btn { height: 90px; padding-bottom: 3px; border-radius: 45px; font-family: Lato, sans-serif; font-size: 30px; }
.btn-o { background: #fff; border: 2px solid #037dd6; color: #037dd6; }
.btn-p { background: #037dd6; border: 0; color: #fff; }

/* dock */
.dock { position: absolute; left: 115px; top: 1636px; width: 2650px; height: 153px; z-index: 4; border-radius: 42px; padding-left: 4px; display: flex; background: linear-gradient(90deg, #6585b8 0%, #7880ba 20%, #8a7cb8 45%, #9a7fba 65%, #ab88b8 82%, #c083b6 100%); box-shadow: 0 0 0 2px rgba(255,255,255,.12) inset, 0 -4px 30px rgba(0,0,0,.25); }
.dk { flex: 0 0 132.700px; padding-top: 22px; display: flex; flex-direction: column; align-items: center; }
.dk svg { width: 100px; height: 100px; overflow: visible; flex: none; }
.dk-sep { flex: 0 0 60px; position: relative; }
.dk-sep::after { content: ""; position: absolute; left: 29px; top: 20px; width: 2px; height: 114px; background: #4f5a8c; }
.dot { width: 6px; height: 7px; border-radius: 50%; background: #0a1650; margin-top: 20px; }
.cal-m { font: 700 20px Inter, sans-serif; fill: #fff; }
.cal-d { font: 300 62px Inter, sans-serif; fill: #1a1a1a; }
.badge { font: 500 26px Inter, sans-serif; fill: #fff; }
.xl { font: 700 28px Inter, sans-serif; fill: #fff; }
.zip { font: 400 20px Inter, sans-serif; fill: #777; }
```
